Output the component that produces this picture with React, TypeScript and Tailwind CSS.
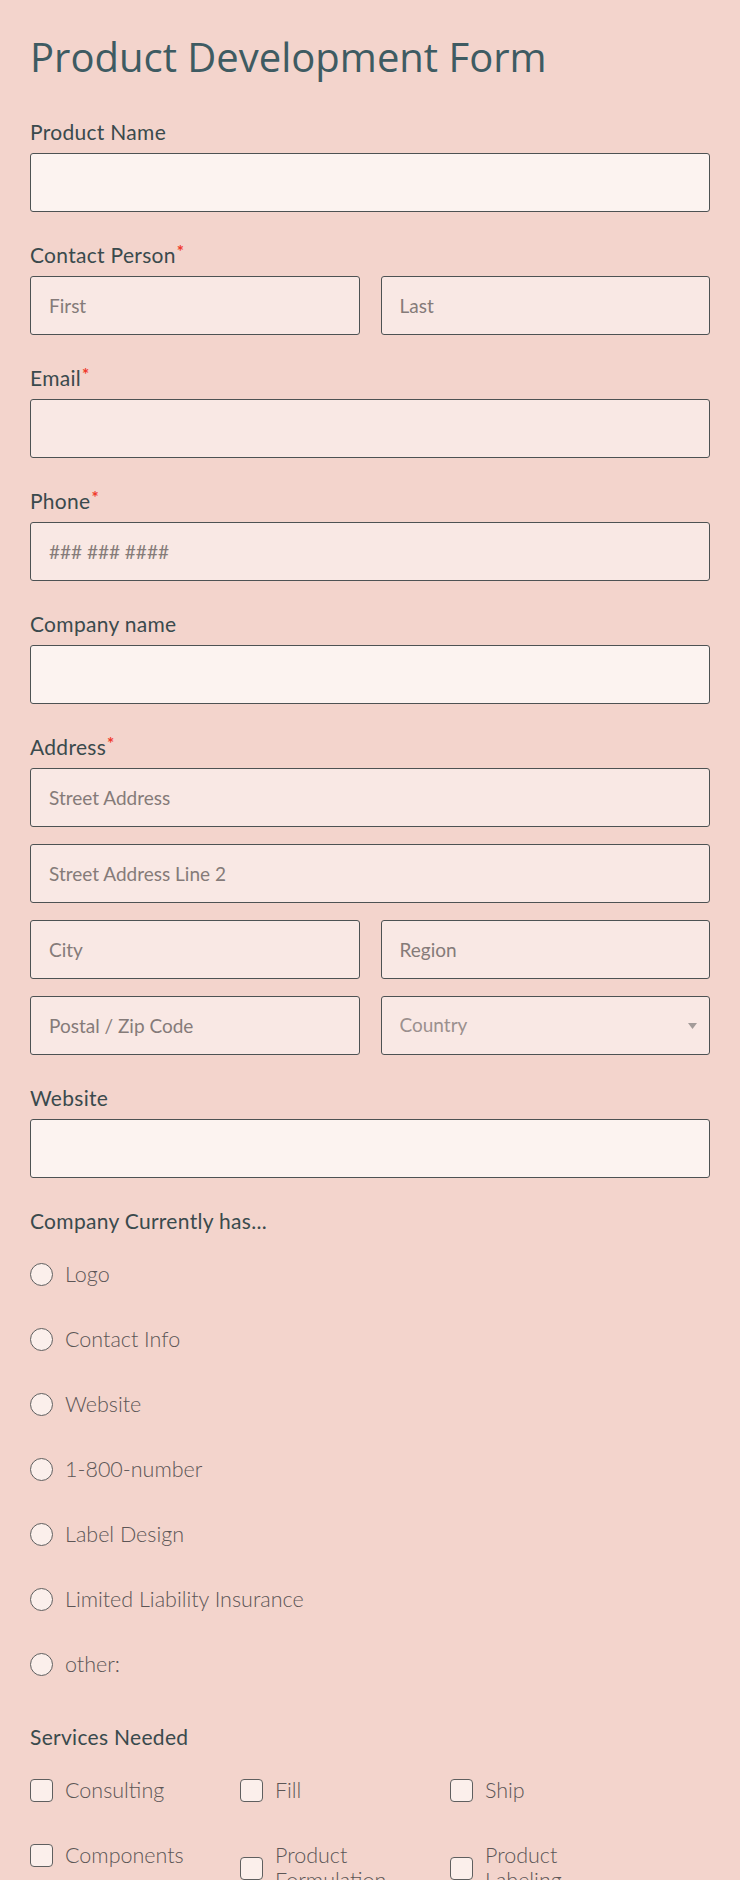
import React from "react";

const labelCls =
  "block text-[21px] leading-[24px] font-normal tracking-[0.3px] text-[#3a4a4d]";
const inputCls =
  "block h-[59px] w-full rounded-[3px] border border-[#4d5253] px-[18px] text-[19px] text-[#4a4a4a] placeholder:text-[#857b79] outline-none";
const lightBg = "bg-[#fcf3f0]";
const darkBg = "bg-[#f9e8e4]";

const Req = () => (
  <span className="ml-[1px] align-top text-[17px] font-bold leading-[18px] text-[#f0392b]">*</span>
);

const Label = ({ text, required }: { text: string; required?: boolean }) => (
  <label className={`${labelCls} mb-[9px]`}>
    {text}
    {required && <Req />}
  </label>
);

const Field = ({
  label,
  required,
  placeholder,
  light,
}: {
  label: string;
  required?: boolean;
  placeholder?: string;
  light?: boolean;
}) => (
  <div>
    <Label text={label} required={required} />
    <input className={`${inputCls} ${light ? lightBg : darkBg}`} placeholder={placeholder} />
  </div>
);

const RADIOS = [
  "Logo",
  "Contact Info",
  "Website",
  "1-800-number",
  "Label Design",
  "Limited Liability Insurance",
  "other:",
];

const SERVICES = ["Consulting", "Fill", "Ship", "Components", "Product Formulation", "Product Labeling"];

export default function App() {
  return (
    <div className="min-h-screen bg-[#f3d4cc] px-[30px] pt-[33px] pb-[60px] font-['Lato',sans-serif]">
      <h1 className="text-[40px] leading-[48px] font-normal text-[#3e5b62] font-['Open_Sans',sans-serif]">
        Product Development Form
      </h1>

      <div className="mt-[39px] flex flex-col gap-[31px]">
        <Field label="Product Name" light />

        <div>
          <Label text="Contact Person" required />
          <div className="grid grid-cols-2 gap-[21px]">
            <input className={`${inputCls} ${darkBg}`} placeholder="First" />
            <input className={`${inputCls} ${darkBg}`} placeholder="Last" />
          </div>
        </div>

        <Field label="Email" required />
        <Field label="Phone" required placeholder="### ### ####" />
        <Field label="Company name" light />

        <div>
          <Label text="Address" required />
          <div className="flex flex-col gap-[17px]">
            <input className={`${inputCls} ${darkBg}`} placeholder="Street Address" />
            <input className={`${inputCls} ${darkBg}`} placeholder="Street Address Line 2" />
            <div className="grid grid-cols-2 gap-[21px]">
              <input className={`${inputCls} ${darkBg}`} placeholder="City" />
              <input className={`${inputCls} ${darkBg}`} placeholder="Region" />
            </div>
            <div className="grid grid-cols-2 gap-[21px]">
              <input className={`${inputCls} ${darkBg}`} placeholder="Postal / Zip Code" />
              <div className="relative">
                <select
                  className={`${inputCls} ${darkBg} appearance-none text-[#9b908e]`}
                  defaultValue=""
                >
                  <option value="">Country</option>
                </select>
                <svg
                  className="pointer-events-none absolute right-[13px] top-1/2 -translate-y-1/2"
                  width="9"
                  height="6"
                  viewBox="0 0 9 6"
                >
                  <path d="M0 0h9L4.5 6z" fill="#a39b99" />
                </svg>
              </div>
            </div>
          </div>
        </div>

        <Field label="Website" light />

        <div>
          <label className={`${labelCls} mb-[29px]`}>Company Currently has...</label>
          <div className="flex flex-col gap-[40px]">
            {RADIOS.map((r) => (
              <div key={r} className="flex items-center gap-[12px]">
                <span className="h-[23px] w-[23px] shrink-0 rounded-full border border-[#5f5f5f] bg-[#fbefeb]" />
                <span className="text-[21.5px] leading-[25px] font-light text-[#5c5656]">{r}</span>
              </div>
            ))}
          </div>
        </div>

        <div className="mt-[17px]">
          <label className={`${labelCls} mb-[29px]`}>Services Needed</label>
          <div className="grid w-[630px] grid-cols-3 items-start gap-y-[40px]">
            {SERVICES.map((s) => (
              <div key={s} className="flex items-center gap-[12px]">
                <span className="h-[23px] w-[23px] shrink-0 rounded-[4px] border border-[#5f5f5f] bg-[#fbefeb]" />
                <span className="max-w-[135px] text-[21.5px] leading-[25px] font-light text-[#5c5656]">
                  {s}
                </span>
              </div>
            ))}
          </div>
        </div>
      </div>
    </div>
  );
}
